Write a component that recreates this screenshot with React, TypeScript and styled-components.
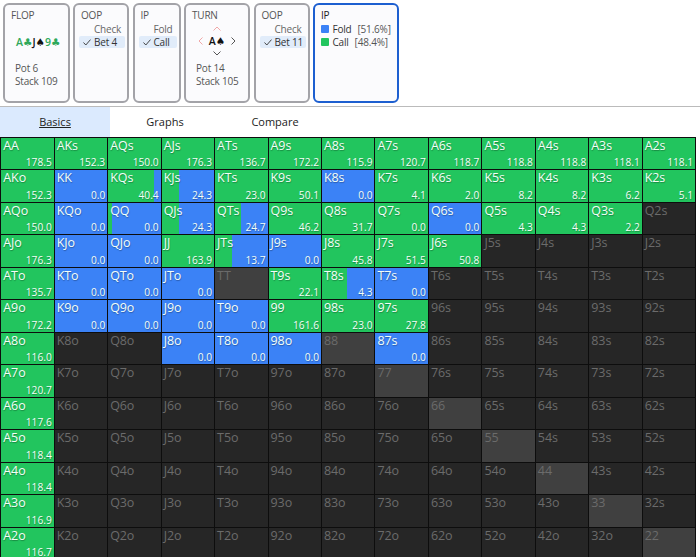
import React from 'react';
import styled, { createGlobalStyle } from 'styled-components';

const Global = createGlobalStyle`
  html, body { margin: 0; padding: 0; background: #fff; overflow: hidden; }
  body { font-family: "Open Sans", "Noto Sans", "Liberation Sans", sans-serif; }
`;

const Page = styled.div`
  width: 700px;
  height: 557px;
  overflow: hidden;
  display: flex;
  flex-direction: column;
`;
const TopBar = styled.div`
  height: 107px;
  flex: none;
  display: flex;
  gap: 3.5px;
  padding: 2.5px 0 0 3px;
  box-sizing: border-box;
  background: #fff;
  border-bottom: 1px solid #bbb;
`;
const Card = styled.div<{ $w: number; $active?: boolean }>`
  width: ${(p) => p.$w}px;
  height: 100.5px;
  box-sizing: border-box;
  border: 2px solid ${(p) => (p.$active ? '#1d5fd0' : '#a3a3a8')};
  border-radius: 6px;
  padding: 3px 0 0 6px;
  background: #fbfbfd;
  font-size: 10px;
  letter-spacing: -0.2px;
  color: #444;
  flex: none;
`;
const CardTitle = styled.div<{ $active?: boolean }>`
  height: 15px;
  line-height: 15px;
  color: ${(p) => (p.$active ? '#222' : '#555')};
  font-weight: ${(p) => (p.$active ? 500 : 400)};
`;
const Board = styled.div`
  margin: 12px 0 0 5px;
  font-size: 10.5px;
  font-weight: 600;
  line-height: 14px;
  height: 16px;
  letter-spacing: 0;
  white-space: nowrap;
`;
const Suit = styled.span<{ $g?: boolean }>`
  color: ${(p) => (p.$g ? '#2ea85a' : '#111')};
`;
const Pip = styled.span`
  font-family: "DejaVu Sans", sans-serif;
  font-weight: 400;
  font-size: 10.5px;
`;
const Stat = styled.div`
  padding-left: 4px;
  height: 13px;
  line-height: 13px;
  color: #555;
  white-space: nowrap;
`;
const Stats = styled.div<{ $top: number }>`
  margin-top: ${(p) => p.$top}px;
`;
const Options = styled.div<{ $flush?: boolean }>`
  margin: 0 0 0 ${(p) => (p.$flush ? 0 : -2)}px;
  display: flex;
  flex-direction: column;
`;
const Option = styled.div<{ $sel?: boolean }>`
  height: 12px;
  line-height: 12px;
  margin-bottom: 1px;
  font-size: 10px;
  padding-left: 15px;
  position: relative;
  margin-right: 2px;
  border-radius: 2px;
  white-space: nowrap;
  background: ${(p) => (p.$sel ? '#e1ecfa' : 'transparent')};
  color: ${(p) => (p.$sel ? '#333' : '#666')};
`;
const Check = styled.svg`
  position: absolute;
  left: 4px;
  top: 3px;
`;
const Picker = styled.div`
  display: grid;
  grid-template-columns: repeat(3, 16.3px);
  grid-template-rows: repeat(3, 12.4px);
  justify-items: center;
  align-items: center;
  margin-left: 0.5px;
`;
const PickCard = styled.div`
  font-size: 10.5px;
  font-weight: 600;
  color: #111;
  line-height: 13px;
  letter-spacing: 0;
  white-space: nowrap;
`;
const Legend = styled.div`
  display: flex;
  align-items: center;
  height: 13px;
  color: #333;
  font-size: 10px;
  font-weight: 500;
  white-space: nowrap;
`;
const Swatch = styled.span<{ $c: string }>`
  width: 7.5px;
  height: 7.5px;
  border-radius: 1px;
  margin-right: 4px;
  background: ${(p) => p.$c};
`;
const Pct = styled.span`
  margin-left: 6px;
  color: #555;
  font-weight: 400;
`;
const Tabs = styled.div`
  height: 29.5px;
  flex: none;
  display: flex;
  background: #fff;
`;
const Tab = styled.div<{ $active?: boolean }>`
  width: 110px;
  text-align: center;
  line-height: 29.5px;
  font-size: 11px;
  color: #222;
  background: ${(p) => (p.$active ? '#dbeafe' : 'transparent')};
  text-decoration: ${(p) => (p.$active ? 'underline' : 'none')};
`;
const Grid = styled.div`
  display: grid;
  grid-template-columns: repeat(13, 1fr);
  grid-auto-rows: 31.5px;
  width: 696.2px;
  box-sizing: border-box;
  background: #0d0d0d;
  gap: 1px;
  padding: 1px 1px 0 1.3px;
`;
const Cell = styled.div<{ $bg: string }>`
  position: relative;
  background: ${(p) => p.$bg};
  overflow: hidden;
  min-width: 0;
`;
const Fill = styled.div`
  position: absolute;
  left: 0;
  top: 0;
  bottom: 0;
  background: #22c55e;
`;
const Hand = styled.div<{ $dim?: boolean }>`
  position: absolute;
  left: 2px;
  top: 0;
  font-size: 12.5px;
  letter-spacing: -0.1px;
  line-height: 16px;
  color: ${(p) => (p.$dim ? '#6b6b6b' : '#f4fff8')};
  text-shadow: ${(p) => (p.$dim ? 'none' : '0.5px 0.5px 1px rgba(0, 0, 0, 0.3)')};
`;
const Val = styled.div`
  position: absolute;
  right: 2px;
  bottom: 1px;
  font-size: 10.2px;
  line-height: 11px;
  color: #f4fff8;
  text-shadow: 0.5px 0.5px 1px rgba(0, 0, 0, 0.3);
`;

const R = ['A','K','Q','J','T','9','8','7','6','5','4','3','2'];
// value, green %
const D: Record<string, [string, number]> = {
  AA:['178.5',100],AKs:['152.3',100],AQs:['150.0',100],AJs:['176.3',100],ATs:['136.7',100],A9s:['172.2',100],A8s:['115.9',100],A7s:['120.7',100],A6s:['118.7',100],A5s:['118.8',100],A4s:['118.8',100],A3s:['118.1',100],A2s:['118.1',100],
  AKo:['152.3',100],KK:['0.0',0],KQs:['40.4',87],KJs:['24.3',34],KTs:['23.0',100],K9s:['50.1',100],K8s:['0.0',0],K7s:['4.1',100],K6s:['2.0',100],K5s:['8.2',100],K4s:['8.2',100],K3s:['6.2',100],K2s:['5.1',100],
  AQo:['150.0',100],KQo:['0.0',0],QQ:['0.0',7],QJs:['24.3',34],QTs:['24.7',49],Q9s:['46.2',100],Q8s:['31.7',100],Q7s:['0.0',100],Q6s:['0.0',0],Q5s:['4.3',100],Q4s:['4.3',100],Q3s:['2.2',100],
  AJo:['176.3',100],KJo:['0.0',0],QJo:['0.0',0],JJ:['163.9',100],JTs:['13.7',32],J9s:['0.0',0],J8s:['45.8',100],J7s:['51.5',100],J6s:['50.8',100],
  ATo:['135.7',100],KTo:['0.0',0],QTo:['0.0',0],JTo:['0.0',0],T9s:['22.1',100],T8s:['4.3',47],T7s:['0.0',0],
  A9o:['172.2',100],K9o:['0.0',0],Q9o:['0.0',0],J9o:['0.0',0],T9o:['0.0',0],'99':['161.6',100],'98s':['23.0',100],'97s':['27.8',100],
  A8o:['116.0',100],J8o:['0.0',0],T8o:['0.0',0],'98o':['0.0',0],'87s':['0.0',0],
  A7o:['120.7',100],A6o:['117.6',100],A5o:['118.4',100],A4o:['118.4',100],A3o:['116.9',100],A2o:['116.7',100],
};

const Tick = () => (
  <Check width="8" height="7" viewBox="0 0 8 7" fill="none" stroke="#333" strokeWidth="0.9"><path d="M0.5 3.5 L2.8 6 L7.5 0.6" /></Check>
);
const Chevron = ({ d, c }: { d: string; c: string }) => (
  <svg width="10" height="10" viewBox="0 0 10 10" fill="none" stroke={c} strokeWidth="1"><path d={d} /></svg>
);

const ActionCard = ({ w, title, top, sel }: { w: number; title: string; top: string; sel: string }) => (
  <Card $w={w}>
    <CardTitle>{title}</CardTitle>
    <Options>
      <Option>{top}</Option>
      <Option $sel><Tick />{sel}</Option>
    </Options>
  </Card>
);

export default function App() {
  const cells: React.ReactNode[] = [];
  R.forEach((r, i) => R.forEach((c, j) => {
    const name = i === j ? r + c : i < j ? r + c + 's' : c + r + 'o';
    const d = D[name];
    const pair = i === j;
    cells.push(
      <Cell key={name} $bg={d ? '#3b82f6' : pair ? '#404040' : '#262626'}>
        {d && d[1] > 0 && <Fill style={{ width: `${d[1]}%` }} />}
        <Hand $dim={!d}>{name}</Hand>
        {d && <Val>{d[0]}</Val>}
      </Cell>
    );
  }));
  return (
    <Page>
      <Global />
      <TopBar>
        <Card $w={66.5}>
          <CardTitle>FLOP</CardTitle>
          <Board>
            <Suit $g>A<Pip>♣</Pip></Suit>
            <Suit>J<Pip>♠</Pip></Suit>
            <Suit $g>9<Pip>♣</Pip></Suit>
          </Board>
          <Stats $top={11}><Stat>Pot 6</Stat><Stat>Stack 109</Stat></Stats>
        </Card>
        <ActionCard w={56} title="OOP" top="Check" sel="Bet 4" />
        <ActionCard w={48} title="IP" top="Fold" sel="Call" />
        <Card $w={66}>
          <CardTitle>TURN</CardTitle>
          <Picker>
            <span />
            <Chevron d="M1.5 6.5 L5 3 L8.5 6.5" c="#f0a8a8" />
            <span />
            <Chevron d="M6.5 1.5 L3 5 L6.5 8.5" c="#f0a8a8" />
            <PickCard>A<Pip>♠</Pip></PickCard>
            <Chevron d="M3.5 1.5 L7 5 L3.5 8.5" c="#555" />
            <span />
            <Chevron d="M1.5 3.5 L5 7 L8.5 3.5" c="#555" />
            <span />
          </Picker>
          <Stats $top={2}><Stat>Pot 14</Stat><Stat>Stack 105</Stat></Stats>
        </Card>
        <ActionCard w={56} title="OOP" top="Check" sel="Bet 11" />
        <Card $w={85.5} $active>
          <CardTitle $active>IP</CardTitle>
          <Options $flush>
            <Legend><Swatch $c="#3b82f6" />Fold<Pct>[51.6%]</Pct></Legend>
            <Legend><Swatch $c="#22c55e" />Call<Pct>[48.4%]</Pct></Legend>
          </Options>
        </Card>
      </TopBar>
      <Tabs>
        <Tab $active>Basics</Tab>
        <Tab>Graphs</Tab>
        <Tab>Compare</Tab>
      </Tabs>
      <Grid>{cells}</Grid>
    </Page>
  );
}
